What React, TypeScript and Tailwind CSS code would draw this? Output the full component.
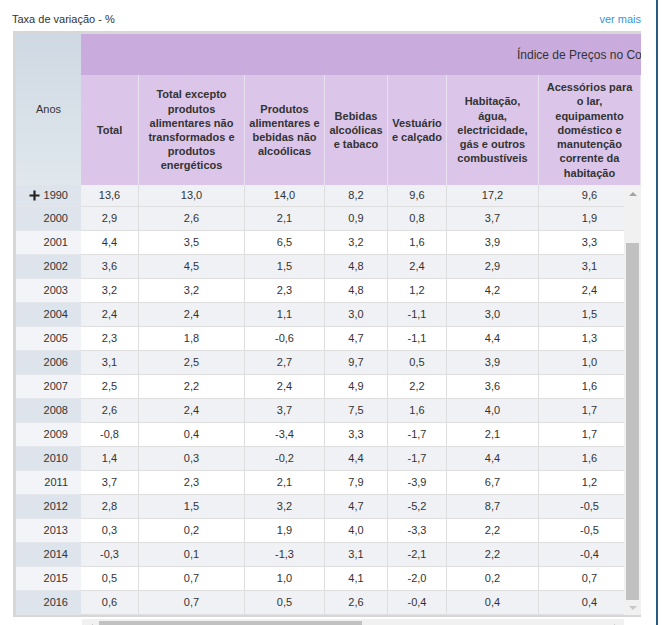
import React from "react";

const COLS = ["w-[58px]", "w-[106px]", "w-[80px]", "w-[63px]", "w-[59px]", "w-[92px]", "w-[102px]"];

const HEADS: string[][] = [
  ["Total"],
  ["Total excepto", "produtos", "alimentares não", "transformados e", "produtos", "energéticos"],
  ["Produtos", "alimentares e", "bebidas não", "alcoólicas"],
  ["Bebidas", "alcoólicas", "e tabaco"],
  ["Vestuário", "e calçado"],
  ["Habitação,", "água,", "electricidade,", "gás e outros", "combustíveis"],
  ["Acessórios para", "o lar,", "equipamento", "doméstico e", "manutenção", "corrente da", "habitação"],
];

const ROWS: [string, string[]][] = [
  ["1990", ["13,6", "13,0", "14,0", "8,2", "9,6", "17,2", "9,6"]],
  ["2000", ["2,9", "2,6", "2,1", "0,9", "0,8", "3,7", "1,9"]],
  ["2001", ["4,4", "3,5", "6,5", "3,2", "1,6", "3,9", "3,3"]],
  ["2002", ["3,6", "4,5", "1,5", "4,8", "2,4", "2,9", "3,1"]],
  ["2003", ["3,2", "3,2", "2,3", "4,8", "1,2", "4,2", "2,4"]],
  ["2004", ["2,4", "2,4", "1,1", "3,0", "-1,1", "3,0", "1,5"]],
  ["2005", ["2,3", "1,8", "-0,6", "4,7", "-1,1", "4,4", "1,3"]],
  ["2006", ["3,1", "2,5", "2,7", "9,7", "0,5", "3,9", "1,0"]],
  ["2007", ["2,5", "2,2", "2,4", "4,9", "2,2", "3,6", "1,6"]],
  ["2008", ["2,6", "2,4", "3,7", "7,5", "1,6", "4,0", "1,7"]],
  ["2009", ["-0,8", "0,4", "-3,4", "3,3", "-1,7", "2,1", "1,7"]],
  ["2010", ["1,4", "0,3", "-0,2", "4,4", "-1,7", "4,4", "1,6"]],
  ["2011", ["3,7", "2,3", "2,1", "7,9", "-3,9", "6,7", "1,2"]],
  ["2012", ["2,8", "1,5", "3,2", "4,7", "-5,2", "8,7", "-0,5"]],
  ["2013", ["0,3", "0,2", "1,9", "4,0", "-3,3", "2,2", "-0,5"]],
  ["2014", ["-0,3", "0,1", "-1,3", "3,1", "-2,1", "2,2", "-0,4"]],
  ["2015", ["0,5", "0,7", "1,0", "4,1", "-2,0", "0,2", "0,7"]],
  ["2016", ["0,6", "0,7", "0,5", "2,6", "-0,4", "0,4", "0,4"]],
];

// 1990 fica fixo no topo, depois alterna cinza / branco
function isGray(i: number) {
  return i === 0 || (i - 1) % 2 === 0;
}

function Plus() {
  return (
    <svg width="11" height="11" viewBox="0 0 11 11">
      <path d="M5.5 0.5v10M0.5 5.5h10" stroke="#222" strokeWidth="2.2" />
    </svg>
  );
}

export default function App() {
  return (
    <div className="w-[662px] h-[625px] overflow-hidden bg-white font-['Liberation_Sans',Arial,sans-serif] text-[#333]">
      <div className="w-[658px] h-full border-r-2 border-[#2a5a86]">
        {/* título */}
        <div className="flex h-[31px] items-start justify-between pl-[12px] pr-[15px] pt-[13px] text-[11px] leading-[13px]">
          <span>Taxa de variação - %</span>
          <span className="text-[#3d92d8]">ver mais</span>
        </div>

        {/* tabela */}
        <div className="ml-[13px] w-[628px] bg-[#d7d7d7] pl-[3px] pt-[2px] pb-[2px]">
          {/* cabeçalho */}
          <div className="flex h-[152px]">
            <div className="flex w-[65px] items-center justify-center bg-gradient-to-b from-[#cfd9e3] to-[#e0e7ed] text-[11px]">
              Anos
            </div>
            <div className="w-[560px] overflow-hidden pt-[1px]">
              <div className="flex h-[41px] items-center whitespace-nowrap bg-[#c9acdd] pl-[436px] text-[12px]">
                Índice de Preços no Consumidor
              </div>
              <div className="flex h-[110px] bg-[#dbc6e9]">
                {HEADS.map((lines, i) => (
                  <div
                    key={i}
                    className={`${COLS[i]} flex shrink-0 flex-col items-center justify-center border-r border-[#e9e0f1] text-center text-[11px] font-bold leading-[14.2px] whitespace-nowrap`}
                  >
                    {lines.map((l, j) => (
                      <span key={j}>{l}</span>
                    ))}
                  </div>
                ))}
              </div>
            </div>
          </div>

          {/* corpo */}
          <div className="flex h-[430px] text-[11px]">
            <div className="w-[65px]">
              {ROWS.map(([year], i) => (
                <div
                  key={year}
                  className={`flex items-center justify-end gap-[4px] border-b border-[#e3e6ea] pr-[13px] ${
                    i === 0 ? "h-[22px]" : "h-[24px]"
                  } ${isGray(i) ? "bg-[#dde4eb]" : "bg-[#f3f4f7]"}`}
                >
                  {i === 0 && <Plus />}
                  <span>{year}</span>
                </div>
              ))}
            </div>
            <div className="w-[543px] overflow-hidden">
              {ROWS.map(([year, vals], i) => (
                <div
                  key={year}
                  className={`flex w-[560px] border-b border-[#dedede] ${i === 0 ? "h-[22px]" : "h-[24px]"} ${
                    isGray(i) ? "bg-[#f0f1f5]" : "bg-white"
                  }`}
                >
                  {vals.map((v, j) => (
                    <div
                      key={j}
                      className={`${COLS[j]} flex shrink-0 items-center justify-center border-r border-[#dedede]`}
                    >
                      {v}
                    </div>
                  ))}
                </div>
              ))}
            </div>
            {/* barra vertical */}
            <div className="flex w-[17px] flex-col bg-[#f1f1f1]">
              <div className="flex h-[17px] items-center justify-center">
                <div className="h-0 w-0 border-x-[4px] border-b-[4px] border-x-transparent border-b-[#a3a3a3]" />
              </div>
              <div className="h-[41px]" />
              <div className="mx-[2px] h-[357px] w-[13px] bg-[#c1c1c1]" />
              <div className="flex h-[15px] items-center justify-center">
                <div className="h-0 w-0 border-x-[4px] border-t-[4px] border-x-transparent border-t-[#c7c7c7]" />
              </div>
            </div>
          </div>
        </div>

        {/* barra horizontal */}
        <div className="ml-[82px] mt-[2px] flex h-[17px] w-[542px] items-start bg-[#f1f1f1]">
          <div className="flex h-[17px] w-[17px] items-center justify-center">
            <div className="h-0 w-0 border-y-[4px] border-r-[4px] border-y-transparent border-r-[#a3a3a3]" />
          </div>
          <div className="mt-[2px] h-[13px] w-[263px] bg-[#c1c1c1]" />
          <div className="flex-1" />
          <div className="flex h-[17px] w-[17px] items-center justify-center">
            <div className="h-0 w-0 border-y-[4px] border-l-[4px] border-y-transparent border-l-[#a3a3a3]" />
          </div>
        </div>
      </div>
    </div>
  );
}
